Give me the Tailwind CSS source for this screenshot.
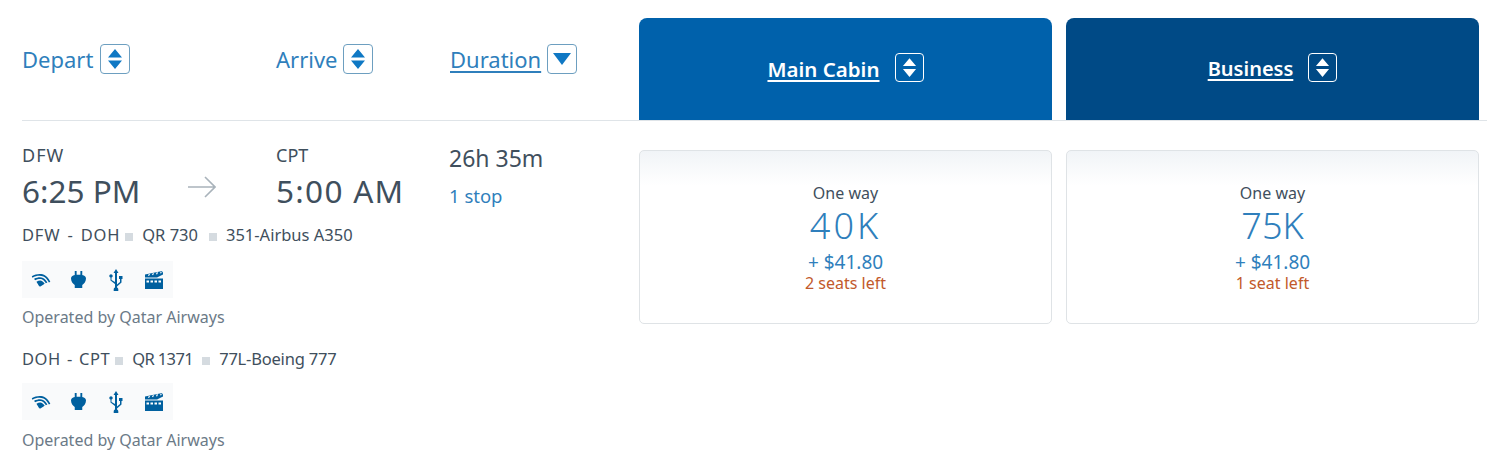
<!doctype html>
<html><head><meta charset="utf-8"><title>Flights</title>
<script src="https://cdn.jsdelivr.net/npm/@tailwindcss/browser@4"></script></head>
<body class="bg-white">
<svg width="0" height="0" class="absolute">
<defs>
<symbol id="wifi" viewBox="0 0 20 14"><path d="M0 5.500C4 2 9 0.500 13 1.500C15 2 17 3.500 19.500 6.500L18.300 7.500C15.500 4.500 13.500 3.300 11.500 3C8 2.500 4 4 1.200 6.800Z M3 7.500C6 5 9 4 11.500 4.500C13.500 5 15 6 16.800 8L15.500 9C14 7.500 12.500 6.500 11 6.200C9 5.800 6.500 7 4.300 8.800Z M6 9.800C8 8 10 7.300 11.500 7.800C12.500 8.100 13.500 8.800 14.500 9.800L11 13.500C10.500 13.800 10 13.800 9.500 13.200Z" fill="#00609f"/></symbol>
<symbol id="plug" viewBox="0 0 16 18"><path d="M4 0h2v4h4V0h2v4.200c2.500.5 4 1.800 4 3.800 0 3.500-2.500 6-4 6.800V18H4v-3.200C2.500 14 0 11.500 0 8c0-2 1.500-3.300 4-3.800z" fill="#00609f"/></symbol>
<symbol id="usb" viewBox="0 0 16 22"><path d="M8 0l2.500 4H9v11.500l3-2.500V10h-1V7h3.500v3H13.500v3.500L9 17.500V18.500c.8.300 1.300 1 1.300 1.800V22H5.700v-1.700c0-.8.5-1.500 1.300-1.800V15L2.500 11.500V8.600C1.800 8.300 1.300 7.700 1.300 7c0-1 .8-1.700 1.700-1.700S4.700 6 4.700 7c0 .7-.5 1.300-1.200 1.600V11L7 13V4H5.500z" fill="#00609f"/></symbol>
<symbol id="film" viewBox="0 0 18 18"><path d="M0 7.500h18V18H0z M0 6.500V3.500L16 0.300c1.200-.2 1.700.5 2 1.500V3.500L12 6.500z" fill="#00609f"/><path d="M3.500 4.800l1-1.800M7.500 4l1-1.800M11.500 3.200l1-1.800M15.500 2.300l.8-1.300" stroke="#fff" stroke-width="1.200"/><path d="M1.500 9.500h2.500v2H1.500zM5.500 9.500h2.500v2H5.500zM9.500 9.500h2.500v2H9.500zM13.500 9.500h2.500v2H13.500z" fill="#fff"/></symbol>
</defs>
</svg>
<div class="w-[1500px] h-[462px] overflow-hidden bg-white pl-[22px] pr-[13px] font-['Noto_Sans',sans-serif] text-[#3f4f5d]">
  <div class="flex h-[121px] border-b border-[#dfe4e8]">
    <div class="w-[254px] pt-[41px] flex items-start">
      <span class="text-[22px] leading-[36px] text-[#2f7fbc]">Depart</span>
      <span class="ml-[7px] mt-[3px] w-[30px] h-[30px] border border-[#6d9fc0] rounded-[4px] flex items-center justify-center">
        <svg width="16" height="20" viewBox="0 0 16 20"><path d="M8 0l7 8.500H1zM8 20l-7-8.500h14z" fill="#0f78c4"/></svg>
      </span>
    </div>
    <div class="w-[174px] pt-[41px] flex items-start">
      <span class="text-[22px] leading-[36px] text-[#2f7fbc]">Arrive</span>
      <span class="ml-[5px] mt-[3px] w-[30px] h-[30px] border border-[#6d9fc0] rounded-[4px] flex items-center justify-center">
        <svg width="16" height="20" viewBox="0 0 16 20"><path d="M8 0l7 8.500H1zM8 20l-7-8.500h14z" fill="#0f78c4"/></svg>
      </span>
    </div>
    <div class="w-[189px] pt-[41px] flex items-start">
      <span class="text-[22px] leading-[36px] text-[#2f7fbc] underline underline-offset-[3px]">Duration</span>
      <span class="ml-[6px] mt-[3px] w-[30px] h-[30px] border border-[#6d9fc0] rounded-[4px] flex items-start justify-center pt-[8px]">
        <svg width="18" height="12" viewBox="0 0 18 12"><path d="M0 0h18L9 12z" fill="#0f78c4"/></svg>
      </span>
    </div>
    <div class="w-[413px] mt-[18px] rounded-t-[8px] bg-[#0061ab] flex items-start justify-center pt-[34px] text-white">
      <span class="text-[20.5px] leading-[34px] font-semibold underline underline-offset-[3px]">Main Cabin</span>
      <span class="ml-[15px] mt-[1px] w-[29px] h-[29px] border border-white rounded-[4px] flex items-center justify-center">
        <svg width="15" height="19" viewBox="0 0 16 20"><path d="M8 0l7 8.500H1zM8 20l-7-8.500h14z" fill="#fff"/></svg>
      </span>
    </div>
    <div class="w-[413px] ml-[14px] mt-[18px] rounded-t-[8px] bg-[#004a86] flex items-start justify-center pt-[34px] text-white">
      <span class="text-[20px] leading-[34px] font-semibold underline underline-offset-[3px]">Business</span>
      <span class="ml-[15px] mt-[1px] w-[29px] h-[29px] border border-white rounded-[4px] flex items-center justify-center">
        <svg width="15" height="19" viewBox="0 0 16 20"><path d="M8 0l7 8.500H1zM8 20l-7-8.500h14z" fill="#fff"/></svg>
      </span>
    </div>
  </div>
  <div class="flex">
    <div class="w-[617px] pt-[21px]">
      <div class="flex">
        <div class="w-[166px]">
          <div class="text-[18px] leading-[26px] tracking-[1px]">DFW</div>
          <div class="text-[31.5px] leading-[44px] mt-[1px]">6:25 PM</div>
        </div>
        <div class="w-[88px] pt-[33px]">
          <svg width="28" height="24" viewBox="0 0 28 24" fill="none" stroke="#a9b3bb" stroke-width="1.600"><path d="M0 12h27M17 2l10 10-10 10"/></svg>
        </div>
        <div class="w-[173px]">
          <div class="text-[18px] leading-[26px]">CPT</div>
          <div class="text-[31.5px] leading-[44px] mt-[1px] tracking-[1.300px]">5:00 AM</div>
        </div>
        <div class="pt-[2px]">
          <div class="text-[23px] leading-[28px]">26h 35m</div>
          <div class="text-[18.5px] leading-[28px] mt-[10px] text-[#2f7fbc]">1 stop</div>
        </div>
      </div>
      <div class="flex items-center text-[16.5px] leading-[26px] mt-[9px]"><span class="tracking-[0.800px] [word-spacing:2px]">DFW - DOH</span><span class="w-[8px] h-[8px] bg-[#d5dbe0] ml-[5px] mr-[9px] mt-[3px]"></span>QR 730<span class="w-[8px] h-[8px] bg-[#d5dbe0] ml-[11px] mr-[9px] mt-[3px]"></span>351-Airbus A350</div>
      <div class="mt-[13px] w-[151px] h-[37px] bg-[#f9fafb] flex items-center pl-[9px]">
        <svg width="20" height="14" class="rotate-[14deg]"><use href="#wifi"/></svg>
        <svg width="15" height="17" class="ml-[20px]"><use href="#plug"/></svg>
        <svg width="16" height="22" class="ml-[22px]"><use href="#usb"/></svg>
        <svg width="18" height="18" class="ml-[21px]"><use href="#film"/></svg>
      </div>
      <div class="text-[16px] leading-[24px] mt-[7px] text-[#6b7a87]">Operated by Qatar Airways</div>
      <div class="flex items-center text-[16.5px] leading-[26px] mt-[17px]"><span class="tracking-[0.500px] [word-spacing:1.500px]">DOH - CPT</span><span class="w-[8px] h-[8px] bg-[#d5dbe0] ml-[5px] mr-[9px] mt-[3px]"></span><span class="tracking-[-0.600px]">QR 1371</span><span class="w-[8px] h-[8px] bg-[#d5dbe0] ml-[9px] mr-[9px] mt-[3px]"></span><span class="tracking-[-0.200px]">77L-Boeing 777</span></div>
      <div class="mt-[11px] w-[151px] h-[37px] bg-[#f9fafb] flex items-center pl-[9px]">
        <svg width="20" height="14" class="rotate-[14deg]"><use href="#wifi"/></svg>
        <svg width="15" height="17" class="ml-[20px]"><use href="#plug"/></svg>
        <svg width="16" height="22" class="ml-[22px]"><use href="#usb"/></svg>
        <svg width="18" height="18" class="ml-[21px]"><use href="#film"/></svg>
      </div>
      <div class="text-[16px] leading-[24px] mt-[8px] text-[#6b7a87]">Operated by Qatar Airways</div>
    </div>
    <div class="w-[413px] h-[174px] mt-[29px] border border-[#dfe3e6] rounded-[5px] bg-linear-to-b from-[#f1f4f7] to-white to-[20%] flex flex-col items-center pt-[30px]">
      <div class="text-[16px] leading-[24px]">One way</div>
      <div class="text-[36px] leading-[42px] text-[#2f7fbc] font-light tracking-[3px]">40K</div>
      <div class="text-[19px] leading-[26px] text-[#2f7fbc] mt-[2px]">+ $41.80</div>
      <div class="text-[16px] leading-[18px] text-[#c2592b] mt-[-1px]">2 seats left</div>
    </div>
    <div class="w-[413px] h-[174px] ml-[14px] mt-[29px] border border-[#dfe3e6] rounded-[5px] bg-linear-to-b from-[#f1f4f7] to-white to-[20%] flex flex-col items-center pt-[30px]">
      <div class="text-[16px] leading-[24px]">One way</div>
      <div class="text-[36px] leading-[42px] text-[#2f7fbc] font-light">75K</div>
      <div class="text-[19px] leading-[26px] text-[#2f7fbc] mt-[2px]">+ $41.80</div>
      <div class="text-[16px] leading-[18px] text-[#c2592b] mt-[-1px]">1 seat left</div>
    </div>
  </div>
</div>
</body></html>
